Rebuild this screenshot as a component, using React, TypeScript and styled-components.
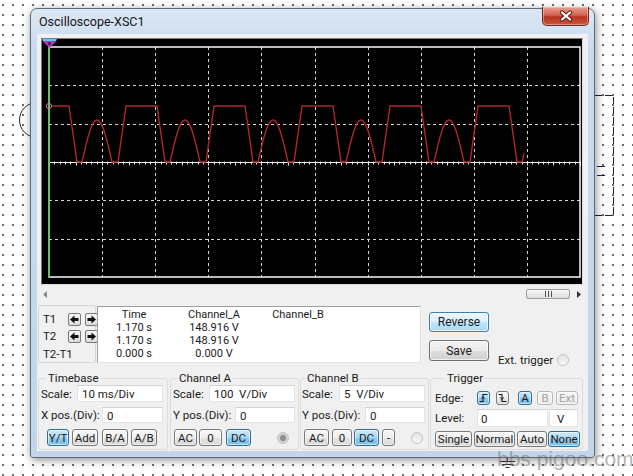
import React from "react";
import styled, { createGlobalStyle } from "styled-components";

const GlobalStyle = createGlobalStyle`
  html, body {
    margin: 0;
    padding: 0;
  }
  body {
    font-family: Roboto, "Liberation Sans", sans-serif;
    color: #1b1b1b;
  }
`;

const Desk = styled.div`
  position: relative;
  width: 633px;
  height: 476px;
  overflow: hidden;
  box-sizing: border-box;
  padding-top: 8px;
  background-color: #fff;
  background-image: radial-gradient(circle at 5px 5px, #4a4a4a 0.6px, transparent 1.2px);
  background-size: 10px 10px;
  background-position: -2px 0;
`;

const Window = styled.div`
  position: relative;
  z-index: 1;
  margin-left: 30px;
  width: 565px;
  height: 450px;
  box-sizing: border-box;
  display: flex;
  flex-direction: column;
  padding: 0 6px 6px;
  border: 1px solid #5d6a7a;
  border-radius: 7px 7px 3px 3px;
  background: linear-gradient(#dce8f5, #c9daee 40px, #c3d5ea);
  box-shadow: 1px 2px 8px rgba(0, 0, 0, 0.45);
`;

const TitleBar = styled.div`
  height: 25px;
  display: flex;
  align-items: flex-start;
  padding-left: 2px;
`;

const Title = styled.span`
  padding-top: 6px;
  font-size: 12.5px;
  line-height: 14px;
  color: #141414;
`;

const CloseButton = styled.div`
  margin: -2px -1px 0 auto;
  width: 47px;
  height: 19px;
  box-sizing: border-box;
  display: flex;
  align-items: center;
  justify-content: center;
  border: 1px solid #6b2a22;
  border-top: none;
  border-radius: 0 0 5px 5px;
  background: linear-gradient(#e8a295, #d1624f 45%, #b9331f 55%, #c9563c);
  box-shadow: inset 0 0 0 1px rgba(255, 220, 210, 0.45);
`;

const Client = styled.div`
  flex: 1;
  min-height: 0;
  display: flex;
  flex-direction: column;
  background: #f0f0f0;
`;

const Screen = styled.div`
  margin: 4px 5px 0 4px;
  height: 247px;
  box-sizing: border-box;
  background: #000;
  border: 1px solid;
  border-color: #7a7a7a #dcdcdc #dcdcdc #7a7a7a;

  svg {
    display: block;
  }
`;

const ScrollRow = styled.div`
  height: 18px;
  display: flex;
  align-items: center;
  padding: 0 7px 0 6px;
`;

const Thumb = styled.div`
  margin-left: auto;
  width: 44px;
  height: 10px;
  box-sizing: border-box;
  display: flex;
  align-items: center;
  justify-content: center;
  border: 1px solid #9c9c9c;
  border-radius: 2px;
  background: linear-gradient(#f6f6f6, #dedede);
`;

const CursorRow = styled.div`
  height: 60px;
  display: flex;
  align-items: flex-start;
`;

const TPanel = styled.div`
  margin: 2px 0 0 1px;
  width: 58px;
  height: 58px;
  box-sizing: border-box;
  border: 1px solid #d6d6d6;
  border-radius: 2px;
  padding: 7px 0 0 4px;
  display: grid;
  grid-template-columns: 21px 13px 13px;
  grid-template-rows: 13px 13px 14px;
  column-gap: 4px;
  row-gap: 4px;
  align-items: center;
  font-size: 11.5px;
`;

const TLabel = styled.span<{ $span?: boolean }>`
  grid-column: ${(p) => (p.$span ? "1 / span 3" : "auto")};
  line-height: 13px;
`;

const ArrowBtn = styled.div`
  width: 13px;
  height: 13px;
  box-sizing: border-box;
  display: flex;
  align-items: center;
  justify-content: center;
  border: 1px solid #7a7a7a;
  border-radius: 2px;
  background: linear-gradient(#f7f7f7, #dcdcdc);
`;

const Readout = styled.div`
  margin: 3px 0 0 1px;
  width: 324px;
  height: 57px;
  box-sizing: border-box;
  background: #fff;
  border: 1px solid;
  border-color: #9f9f9f #e3e3e3 #e3e3e3 #9f9f9f;
  padding-top: 1px;
  display: grid;
  grid-template-columns: 72px 88px 80px;
  grid-auto-rows: 13px;
  font-size: 11px;
  line-height: 13px;
  text-align: center;
`;

const ButtonCol = styled.div`
  margin-left: 8px;
  padding-top: 9px;
  display: flex;
  flex-direction: column;
  gap: 8px;
`;

const BigButton = styled.div<{ $hot?: boolean; $h: number }>`
  width: 60px;
  height: ${(p) => p.$h}px;
  box-sizing: border-box;
  display: flex;
  align-items: center;
  justify-content: center;
  font-size: 12px;
  border: 1px solid ${(p) => (p.$hot ? "#3c7fb1" : "#707070")};
  border-radius: 3px;
  background: ${(p) =>
    p.$hot
      ? "linear-gradient(#eaf6fd 0%, #d9f0fc 50%, #bee6fd 51%, #a7d9f5 100%)"
      : "linear-gradient(#f2f2f2 0%, #ebebeb 50%, #dddddd 51%, #cfcfcf 100%)"};
  box-shadow: inset 0 0 0 1px rgba(255, 255, 255, 0.7);
`;

const ExtTrigger = styled.div`
  align-self: flex-end;
  margin: 0 0 -4px 9px;
  height: 14px;
  display: flex;
  align-items: center;
  gap: 4px;
  font-size: 11.5px;
`;

const GroupRow = styled.div`
  margin-top: 8px;
  display: flex;
`;

const Group = styled.fieldset<{ $w: number; $ml: number; $pl: number; $pr: number }>`
  margin: 0 0 0 ${(p) => p.$ml}px;
  width: ${(p) => p.$w}px;
  height: 79px;
  min-width: 0;
  box-sizing: border-box;
  padding: 0 ${(p) => p.$pr}px 0 ${(p) => p.$pl}px;
  border: 1px solid #dcdcdc;
  border-radius: 3px;
  display: flex;
  flex-direction: column;
`;

const Legend = styled.legend<{ $ml: number }>`
  margin-left: ${(p) => p.$ml}px;
  padding: 0 2px;
  font-size: 11.5px;
  line-height: 14px;
`;

const Row = styled.div<{ $h: number; $mt: number; $ml?: number }>`
  height: ${(p) => p.$h}px;
  margin: ${(p) => p.$mt}px 0 0 ${(p) => p.$ml ?? 0}px;
  display: flex;
  align-items: center;
  font-size: 11.5px;
`;

const FieldLabel = styled.span<{ $w?: number }>`
  width: ${(p) => (p.$w ? `${p.$w}px` : "auto")};
  flex: none;
  white-space: nowrap;
`;

const TextBox = styled.div<{ $w: number; $pl: number; $ml?: number; $auto?: boolean }>`
  margin-left: ${(p) => (p.$auto ? "auto" : `${p.$ml ?? 0}px`)};
  width: ${(p) => p.$w}px;
  height: 100%;
  box-sizing: border-box;
  padding: 1px 0 0 ${(p) => p.$pl}px;
  display: flex;
  align-items: center;
  background: #fff;
  border: 1px solid #e4e4e4;
  border-top-color: #d2d2d2;
  white-space: pre;
  font-size: 11.5px;
`;

const Btn = styled.div<{ $w: number; $ml?: number; $on?: boolean; $off?: boolean }>`
  margin-left: ${(p) => p.$ml ?? 0}px;
  width: ${(p) => p.$w}px;
  height: 100%;
  box-sizing: border-box;
  display: flex;
  align-items: center;
  justify-content: center;
  font-size: 11.5px;
  color: ${(p) => (p.$off ? "#a3a3a3" : "#1b1b1b")};
  border: 1px solid ${(p) => (p.$on ? "#2f6d9c" : p.$off ? "#b5b9bc" : "#787878")};
  border-radius: 3px;
  background: ${(p) =>
    p.$on
      ? "linear-gradient(#cdeafa 0%, #a9d8f3 50%, #8cc8ec 51%, #7bbfe8 100%)"
      : p.$off
      ? "linear-gradient(#f6f6f6, #ececec)"
      : "linear-gradient(#f7f7f7 0%, #efefef 50%, #e3e3e3 51%, #d9d9d9 100%)"};
  box-shadow: inset 0 0 0 1px rgba(255, 255, 255, 0.6);
`;

const Radio = styled.span<{ $ml?: number; $dot?: boolean }>`
  margin-left: ${(p) => p.$ml ?? 0}px;
  width: 12px;
  height: 12px;
  flex: none;
  box-sizing: border-box;
  border-radius: 50%;
  border: 1px solid #c4c4c4;
  background: ${(p) =>
    p.$dot
      ? "radial-gradient(circle, #8f8f8f 0 2.6px, #cfcfcf 3.6px, #e6e6e6 100%)"
      : "linear-gradient(#e2e2e2, #f8f8f8)"};
`;

const Canvas = styled.svg<{ $x: number; $y: number; $z?: number }>`
  position: absolute;
  left: ${(p) => p.$x}px;
  top: ${(p) => p.$y}px;
  z-index: ${(p) => p.$z ?? 0};
`;

const Watermark = styled.div`
  position: absolute;
  left: 497px;
  top: 450px;
  z-index: 2;
  font-family: "Liberation Sans", Arial, sans-serif;
  font-size: 21px;
  line-height: 18px;
  color: rgba(105, 105, 105, 0.5);
`;

// plot geometry, in screen (svg) coordinates; page = svg + (42, 39)
const PL = 7;
const PR = 538;
const PT = 8;
const PB = 238;
const DX = (PR - PL) / 10;
const DY = (PB - PT) / 6;
const BASE = PT + 3 * DY;

function waveY(u: number): number {
  if (u < 31) return 106;
  if (u < 39) return 106 + ((u - 31) / 8) * 56;
  if (u < 44) return 162;
  if (u < 74) return 162 - 42 * Math.sin((Math.PI * (u - 44)) / 30);
  if (u < 80) return 162;
  return 162 - ((u - 80) / 8) * 56;
}

const trace = (() => {
  const pts: string[] = [];
  for (let x = 52; x <= 524; x += 0.5) {
    const u = (((x - 38) % 88) + 88) % 88;
    pts.push(`${(x - 42).toFixed(1)},${(waveY(u) - 39).toFixed(1)}`);
  }
  return pts.join(" ");
})();

const Plot = () => {
  const vx = Array.from({ length: 9 }, (_, i) => Math.round(PL + (i + 1) * DX) + 0.5);
  const hy = [1, 2, 4, 5].map((j) => Math.round(PT + j * DY) + 0.5);
  const ticks = Array.from({ length: 101 }, (_, i) => PL + (i * DX) / 10);
  const by = Math.round(BASE) + 0.5;
  return (
    <svg width="540" height="245" viewBox="0 0 540 245">
      {vx.map((x) => (
        <line key={x} x1={x} y1={PT} x2={x} y2={PB} stroke="#d6d6d6" strokeDasharray="3 3" />
      ))}
      {hy.map((y) => (
        <line key={y} x1={PL} y1={y} x2={PR} y2={y} stroke="#d6d6d6" strokeDasharray="3 3" />
      ))}
      <line x1={PL} y1={by} x2={PR} y2={by} stroke="#f4f4f4" strokeWidth="1.2" />
      {ticks.map((x, i) => (
        <line
          key={i}
          x1={Math.round(x) + 0.5}
          y1={by - 1}
          x2={Math.round(x) + 0.5}
          y2={by + (i % 5 === 0 ? 3 : 2)}
          stroke="#e8e8e8"
        />
      ))}
      <rect x={PL} y={PT} width={PR - PL} height={PB - PT} fill="none" stroke="#fafafa" strokeWidth="1.5" />
      <polyline points={trace} fill="none" stroke="#b3262b" strokeWidth="1.4" strokeLinejoin="round" />
      <line x1={PL} y1={PT} x2={PL} y2={PB} stroke="#47c447" strokeWidth="1.5" />
      <circle cx={PL} cy={67} r="2.6" fill="none" stroke="#d77ab8" strokeWidth="1" />
      <polygon points="0,1.5 15,1.5 7.5,9" fill="#a83cc4" />
      <polygon points="0,0 15,0 13.8,2 1.2,2" fill="#63c7e6" />
      <rect x="6.5" y="3" width="2" height="3" fill="#2a0a33" />
    </svg>
  );
};

const LeftArrow = () => (
  <svg width="9" height="9" viewBox="0 0 9 9">
    <polygon points="0,4.5 4.5,0.5 4.5,3 8.5,3 8.5,6 4.5,6 4.5,8.5" fill="#111" />
  </svg>
);

const RightArrow = () => (
  <svg width="9" height="9" viewBox="0 0 9 9">
    <polygon points="9,4.5 4.5,0.5 4.5,3 0.5,3 0.5,6 4.5,6 4.5,8.5" fill="#111" />
  </svg>
);

const EdgeIcon = ({ rising }: { rising: boolean }) => (
  <svg width="9" height="10" viewBox="0 0 9 10">
    <path
      d={rising ? "M0.5 8.5 H4 V1.5 H8.5" : "M0.5 1.5 H4 V8.5 H8.5"}
      fill="none"
      stroke="#1b1b1b"
      strokeWidth="1.1"
    />
    <path d={rising ? "M2.4 5.6 L4 3.6 L5.6 5.6" : "M2.4 4.4 L4 6.4 L5.6 4.4"} fill="none" stroke="#1b1b1b" strokeWidth="1" />
  </svg>
);

const App = () => {
  return (
    <>
      <GlobalStyle />
      <Desk>
        <Canvas $x={15} $y={98} width="30" height="45" viewBox="0 0 30 45">
          <circle cx="22" cy="22" r="17.5" fill="none" stroke="#222" strokeWidth="1" />
        </Canvas>
        <Canvas $x={592} $y={90} width="25" height="132" viewBox="0 0 25 132">
          <path d="M3 5.5 H21.5 V125.5 H3" fill="none" stroke="#1d1d45" strokeDasharray="7 3" />
          <path d="M5 76.5 H13 M5 85.5 H13" stroke="#1d1d45" />
        </Canvas>
        <Canvas $x={498} $y={452} width="18" height="18" viewBox="0 0 18 18">
          <path d="M9.5 0 V9.5 M2 9.5 H17 M5 12.5 H14 M7.5 15.5 H11.5" stroke="#333" />
        </Canvas>

        <Window>
          <TitleBar>
            <Title>Oscilloscope-XSC1</Title>
            <CloseButton>
              <svg width="14" height="12" viewBox="0 0 14 12">
                <path d="M3 2.5 L11 9.5 M11 2.5 L3 9.5" stroke="#5a1a12" strokeWidth="4.2" strokeLinecap="round" />
                <path d="M3 2.5 L11 9.5 M11 2.5 L3 9.5" stroke="#fff" strokeWidth="2.3" strokeLinecap="round" />
              </svg>
            </CloseButton>
          </TitleBar>

          <Client>
            <Screen>
              <Plot />
            </Screen>

            <ScrollRow>
              <svg width="4" height="7" viewBox="0 0 4 7">
                <polygon points="4,0 0,3.5 4,7" fill="#8a8a8a" />
              </svg>
              <Thumb>
                <svg width="9" height="6" viewBox="0 0 9 6">
                  <path d="M1.5 0 V6 M4.5 0 V6 M7.5 0 V6" stroke="#555" />
                </svg>
              </Thumb>
              <svg width="4" height="7" viewBox="0 0 4 7" style={{ marginLeft: 7 }}>
                <polygon points="0,0 4,3.5 0,7" fill="#333" />
              </svg>
            </ScrollRow>

            <CursorRow>
              <TPanel>
                <TLabel>T1</TLabel>
                <ArrowBtn>
                  <LeftArrow />
                </ArrowBtn>
                <ArrowBtn>
                  <RightArrow />
                </ArrowBtn>
                <TLabel>T2</TLabel>
                <ArrowBtn>
                  <LeftArrow />
                </ArrowBtn>
                <ArrowBtn>
                  <RightArrow />
                </ArrowBtn>
                <TLabel $span>T2-T1</TLabel>
              </TPanel>

              <Readout>
                <span>Time</span>
                <span>Channel_A</span>
                <span>Channel_B</span>
                <span>1.170 s</span>
                <span>148.916 V</span>
                <span />
                <span>1.170 s</span>
                <span>148.916 V</span>
                <span />
                <span>0.000 s</span>
                <span>0.000 V</span>
                <span />
              </Readout>

              <ButtonCol>
                <BigButton $hot $h={20}>Reverse</BigButton>
                <BigButton $h={21}>Save</BigButton>
              </ButtonCol>

              <ExtTrigger>
                Ext. trigger
                <Radio />
              </ExtTrigger>
            </CursorRow>

            <GroupRow>
              <Group $w={130} $ml={1} $pl={2} $pr={4}>
                <Legend $ml={5}>Timebase</Legend>
                <Row $h={17} $mt={0}>
                  <FieldLabel>Scale:</FieldLabel>
                  <TextBox $auto $w={86} $pl={4}>10 ms/Div</TextBox>
                </Row>
                <Row $h={16} $mt={5}>
                  <FieldLabel>X pos.(Div):</FieldLabel>
                  <TextBox $auto $w={61} $pl={4}>0</TextBox>
                </Row>
                <Row $h={17} $mt={6} $ml={6}>
                  <Btn $w={22} $on>Y/T</Btn>
                  <Btn $w={26} $ml={3}>Add</Btn>
                  <Btn $w={26} $ml={4}>B/A</Btn>
                  <Btn $w={26} $ml={3}>A/B</Btn>
                </Row>
              </Group>

              <Group $w={129} $ml={2} $pl={2} $pr={3}>
                <Legend $ml={4}>Channel A</Legend>
                <Row $h={17} $mt={0}>
                  <FieldLabel>Scale:</FieldLabel>
                  <TextBox $auto $w={86} $pl={4}>{"100  V/Div"}</TextBox>
                </Row>
                <Row $h={16} $mt={5}>
                  <FieldLabel>Y pos.(Div):</FieldLabel>
                  <TextBox $auto $w={60} $pl={4}>0</TextBox>
                </Row>
                <Row $h={17} $mt={6} $ml={1}>
                  <Btn $w={23}>AC</Btn>
                  <Btn $w={23} $ml={2}>0</Btn>
                  <Btn $w={25} $ml={4} $on>DC</Btn>
                  <Radio $ml={26} $dot />
                </Row>
              </Group>

              <Group $w={129} $ml={1} $pl={1} $pr={3}>
                <Legend $ml={3}>Channel B</Legend>
                <Row $h={17} $mt={0}>
                  <FieldLabel>Scale:</FieldLabel>
                  <TextBox $auto $w={86} $pl={4}>{"5  V/Div"}</TextBox>
                </Row>
                <Row $h={16} $mt={5}>
                  <FieldLabel>Y pos.(Div):</FieldLabel>
                  <TextBox $auto $w={60} $pl={4}>0</TextBox>
                </Row>
                <Row $h={17} $mt={6} $ml={2}>
                  <Btn $w={25}>AC</Btn>
                  <Btn $w={20} $ml={3}>0</Btn>
                  <Btn $w={25} $ml={2} $on>DC</Btn>
                  <Btn $w={13} $ml={3}>-</Btn>
                  <Radio $ml={16} />
                </Row>
              </Group>

              <Group $w={153} $ml={1} $pl={4} $pr={2}>
                <Legend $ml={10}>Trigger</Legend>
                <Row $h={14} $mt={6}>
                  <FieldLabel $w={42}>Edge:</FieldLabel>
                  <Btn $w={13} $on>
                    <EdgeIcon rising />
                  </Btn>
                  <Btn $w={13} $ml={6}>
                    <EdgeIcon rising={false} />
                  </Btn>
                  <Btn $w={14} $ml={9} $on>A</Btn>
                  <Btn $w={16} $ml={5} $off>B</Btn>
                  <Btn $w={22} $ml={3} $off>Ext</Btn>
                </Row>
                <Row $h={18} $mt={4}>
                  <FieldLabel $w={42}>Level:</FieldLabel>
                  <TextBox $w={71} $pl={3}>0</TextBox>
                  <TextBox $w={29} $pl={7} $ml={1}>V</TextBox>
                </Row>
                <Row $h={16} $mt={4}>
                  <Btn $w={37}>Single</Btn>
                  <Btn $w={41} $ml={2}>Normal</Btn>
                  <Btn $w={30} $ml={2}>Auto</Btn>
                  <Btn $w={32} $ml={1} $on>None</Btn>
                </Row>
              </Group>
            </GroupRow>
          </Client>
        </Window>

        <Watermark>bbs.pigoo.com</Watermark>
      </Desk>
    </>
  );
};

export default App;
